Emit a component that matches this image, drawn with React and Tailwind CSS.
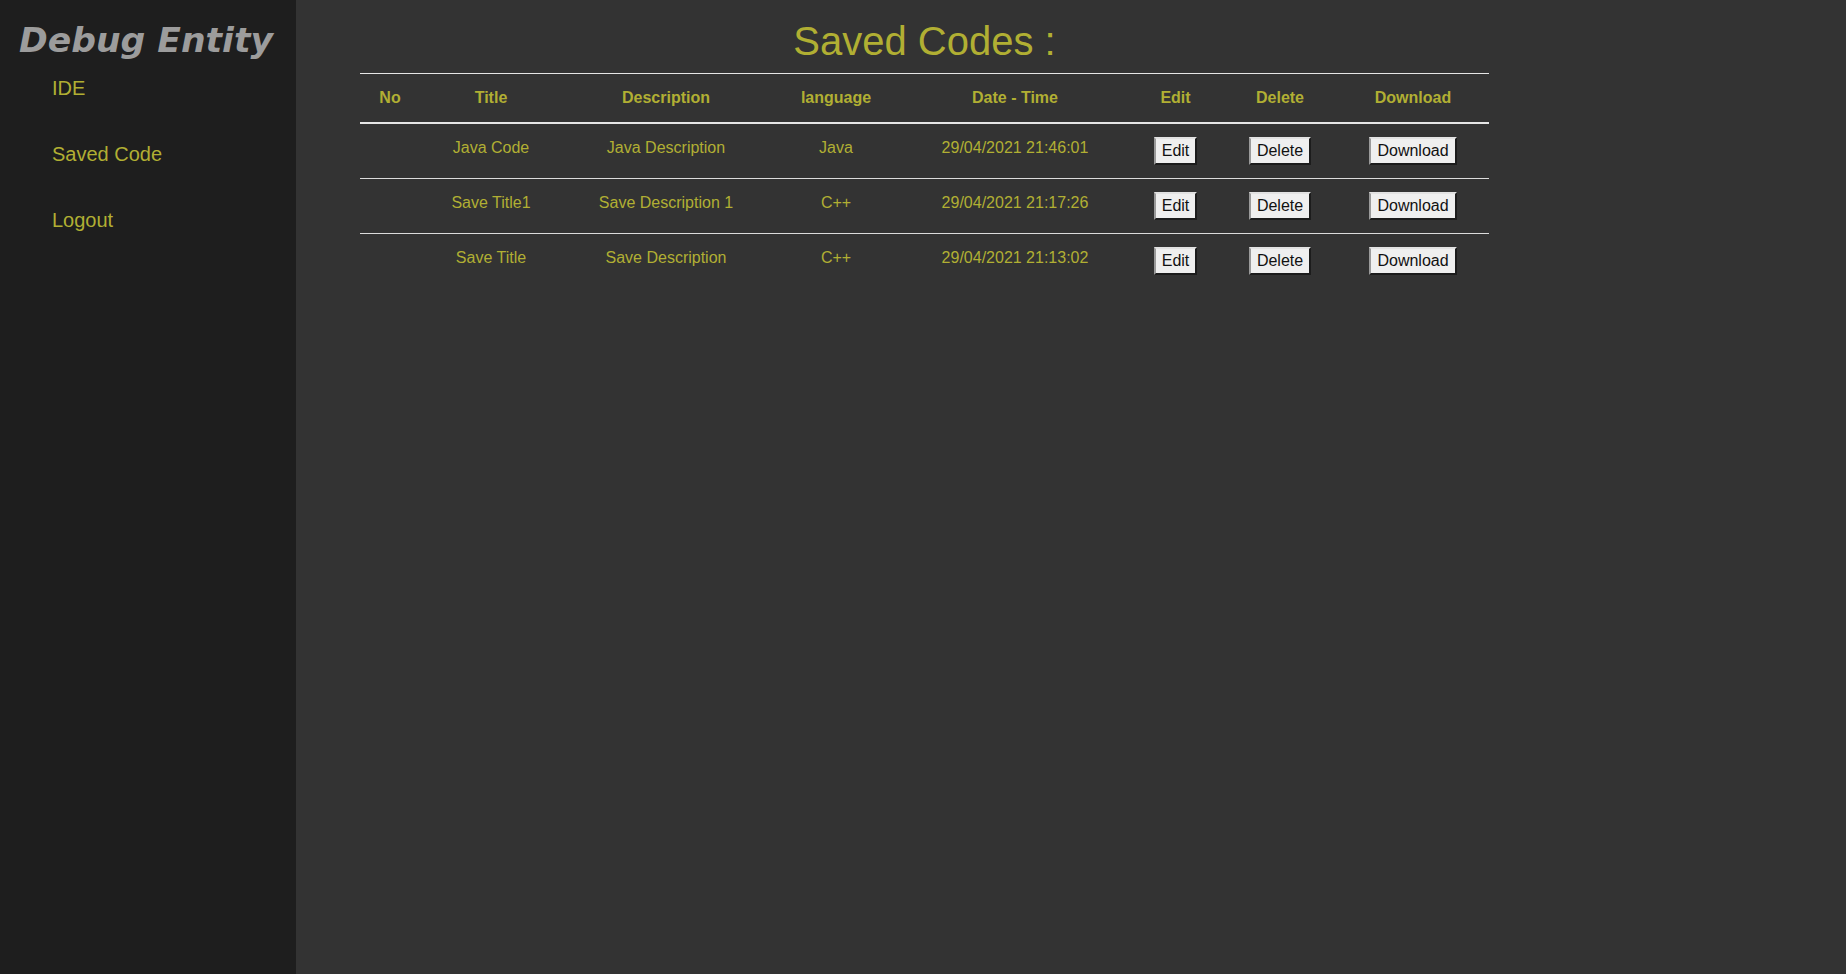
import React from 'react';

const rows = [
  { title: 'Java Code', desc: 'Java Description', lang: 'Java', date: '29/04/2021 21:46:01' },
  { title: 'Save Title1', desc: 'Save Description 1', lang: 'C++', date: '29/04/2021 21:17:26' },
  { title: 'Save Title', desc: 'Save Description', lang: 'C++', date: '29/04/2021 21:13:02' },
];

const cols = 'grid grid-cols-[60px_142px_208px_132px_226px_95px_114px_152px]';

function Btn({ children }) {
  return (
    <button className="bg-[#efefef] text-[#111] text-[16px] leading-[18px] px-[6px] py-[3px] border-2 border-t-[#e2e2e2] border-l-[#9a9a9a] border-r-[#1c1c1c] border-b-[#1c1c1c]">
      {children}
    </button>
  );
}

export default function App() {
  return (
    <div className="flex h-screen w-full bg-[#333333] font-['Liberation_Sans',Arial,sans-serif]">
      {/* sidebar */}
      <aside className="w-[296px] flex-shrink-0 bg-[#1e1e1e] pt-[20px]">
        <div className="pl-[19px] font-['DejaVu_Sans',Verdana,sans-serif] font-bold italic text-[34.6px] leading-[41px] text-[#9c9c9c]">
          Debug Entity
        </div>
        <nav className="mt-[16px] pl-[52px] flex flex-col gap-[43px] text-[20px] leading-[23px] text-[#b1af33]">
          <a>IDE</a>
          <a>Saved Code</a>
          <a>Logout</a>
        </nav>
      </aside>

      {/* main */}
      <main className="flex-1 pl-[64px] pt-[18px]">
        <div className="w-[1129px]">
          <h1 className="text-center text-[40px] leading-[46px] text-[#b1af33]">Saved Codes :</h1>

          <div className="mt-[9px] border-t border-[#e6e6e6]">
            <div className={`${cols} h-[50px] border-b-2 border-[#e6e6e6] items-center text-center font-bold text-[16px] text-[#b1af33]`}>
              <div>No</div>
              <div>Title</div>
              <div>Description</div>
              <div>language</div>
              <div>Date - Time</div>
              <div>Edit</div>
              <div>Delete</div>
              <div>Download</div>
            </div>

            {rows.map((r, i) => (
              <div
                key={i}
                className={`${cols} items-center text-center text-[16px] text-[#b1af33] ${i < rows.length - 1 ? 'h-[55px] border-b border-[#dcdcdc]' : 'h-[54px]'}`}
              >
                <div className="pb-[6px]"></div>
                <div className="pb-[6px]">{r.title}</div>
                <div className="pb-[6px]">{r.desc}</div>
                <div className="pb-[6px]">{r.lang}</div>
                <div className="pb-[6px]">{r.date}</div>
                <div><Btn>Edit</Btn></div>
                <div><Btn>Delete</Btn></div>
                <div><Btn>Download</Btn></div>
              </div>
            ))}
          </div>
        </div>
      </main>
    </div>
  );
}
